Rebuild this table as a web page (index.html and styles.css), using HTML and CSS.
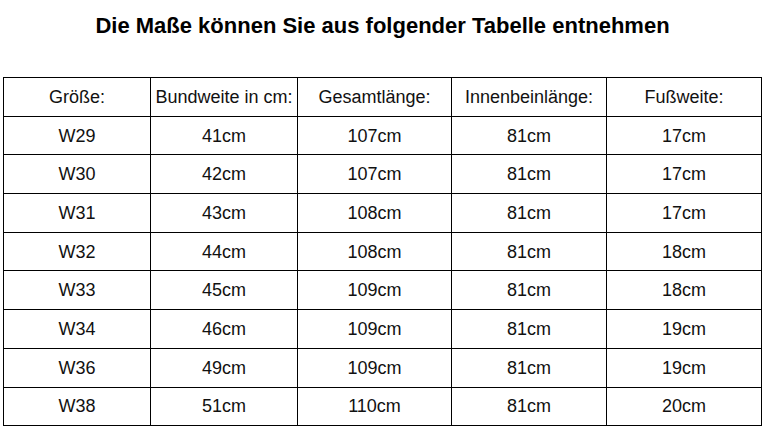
FILE: index.html
```html
<!DOCTYPE html>
<html lang="de">
<head>
<meta charset="utf-8">
<link rel="stylesheet" href="styles.css">
</head>
<body>
<div class="page">
  <h1 class="title">Die Maße können Sie aus folgender Tabelle entnehmen</h1>
  <table class="sizes">
    <colgroup>
      <col class="c1"><col class="c2"><col class="c3"><col class="c4"><col class="c5">
    </colgroup>
    <tr><td>Größe:</td><td>Bundweite in cm:</td><td>Gesamtlänge:</td><td>Innenbeinlänge:</td><td>Fußweite:</td></tr>
    <tr><td>W29</td><td>41cm</td><td>107cm</td><td>81cm</td><td>17cm</td></tr>
    <tr><td>W30</td><td>42cm</td><td>107cm</td><td>81cm</td><td>17cm</td></tr>
    <tr><td>W31</td><td>43cm</td><td>108cm</td><td>81cm</td><td>17cm</td></tr>
    <tr><td>W32</td><td>44cm</td><td>108cm</td><td>81cm</td><td>18cm</td></tr>
    <tr><td>W33</td><td>45cm</td><td>109cm</td><td>81cm</td><td>18cm</td></tr>
    <tr><td>W34</td><td>46cm</td><td>109cm</td><td>81cm</td><td>19cm</td></tr>
    <tr><td>W36</td><td>49cm</td><td>109cm</td><td>81cm</td><td>19cm</td></tr>
    <tr><td>W38</td><td>51cm</td><td>110cm</td><td>81cm</td><td>20cm</td></tr>
  </table>
</div>
</body>
</html>
```
FILE: styles.css
```css
html, body {
  margin: 0;
  padding: 0;
  background: #fff;
}
.page {
  padding: 0 5px 0 3px;
  font-family: "Liberation Sans", Arial, sans-serif;
  color: #111;
}
.title {
  margin: 0;
  height: 77px;
  padding-top: 12px;
  box-sizing: border-box;
  font-size: 22px;
  line-height: 28px;
  font-weight: bold;
  text-align: center;
  color: #000;
}
.sizes {
  width: 759px;
  border-collapse: collapse;
  table-layout: fixed;
}
.c1 { width: 147px; }
.c2 { width: 147px; }
.c3 { width: 154px; }
.c4 { width: 155px; }
.c5 { width: 155px; }
.sizes td {
  border: 1px solid #000;
  height: 37.7px;
  padding: 0;
  text-align: center;
  vertical-align: middle;
  font-size: 18px;
  line-height: 22px;
}
```
